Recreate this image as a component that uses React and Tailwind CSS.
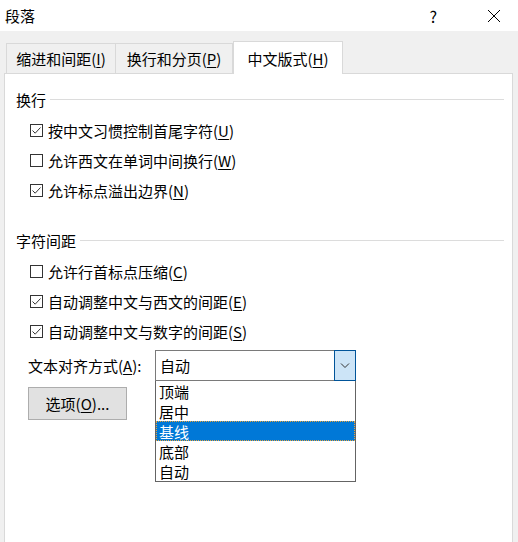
import React from 'react';

const FONT = { fontFamily: '"Noto Sans CJK SC", "Microsoft YaHei", sans-serif' };

function CheckBox({ checked }) {
  return (
    <span className="w-[13px] h-[13px] border border-[#333333] bg-white flex items-center justify-center shrink-0">
      {checked && (
        <svg width="11" height="11" viewBox="0 0 11 11">
          <path d="M1.5 5.5 L4.2 8.2 L9.5 2.5" fill="none" stroke="#333333" strokeWidth="1" />
        </svg>
      )}
    </span>
  );
}

function Option({ checked, text, hot }) {
  return (
    <div className="h-[30px] flex items-center pl-[25px] gap-[5px]">
      <CheckBox checked={checked} />
      <span className="text-[15px] leading-none">
        {text}(<span className="underline underline-offset-2">{hot}</span>)
      </span>
    </div>
  );
}

function Section({ title }) {
  return (
    <div className="h-5 flex items-center pl-[11px] pr-[8px] gap-[4px]">
      <span className="text-[15px] leading-none">{title}</span>
      <div className="flex-1 h-px bg-[#dcdcdc]" />
    </div>
  );
}

export default function App() {
  const items = ['顶端', '居中', '基线', '底部', '自动'];
  return (
    <div className="w-[518px] h-[542px] bg-[#f0f0f0] overflow-hidden flex flex-col text-black" style={FONT}>
      {/* title bar */}
      <div className="h-[31px] bg-white flex items-center shrink-0">
        <span className="pl-[5px] text-[15px] leading-none">段落</span>
        <div className="flex-1" />
        <span className="text-[16px] leading-none mr-[50px]">?</span>
        <svg width="14" height="14" viewBox="0 0 14 14" className="mr-[17px]">
          <path d="M1 1 L13 13 M13 1 L1 13" stroke="#000" strokeWidth="1" />
        </svg>
      </div>

      {/* tabs */}
      <div className="h-[42px] flex items-end pl-[6px] shrink-0">
        <div className="w-[110px] h-[30px] border border-b-0 border-[#d9d9d9] flex items-center justify-center text-[15px] leading-none">
          缩进和间距(<span className="underline underline-offset-2">I</span>)
        </div>
        <div className="w-[117px] h-[30px] border border-l-0 border-b-0 border-[#d9d9d9] flex items-center justify-center text-[15px] leading-none">
          换行和分页(<span className="underline underline-offset-2">P</span>)
        </div>
        <div className="w-[110px] h-[33px] -mb-px relative z-10 bg-white border border-b-0 border-[#d9d9d9] flex items-center justify-center text-[15px] leading-none">
          中文版式(<span className="underline underline-offset-2">H</span>)
        </div>
      </div>

      {/* panel */}
      <div className="flex-1 mx-[4px] mr-[5px] bg-white border border-b-0 border-[#d9d9d9] pt-[15px]">
        <Section title="换行" />
        <div className="mt-[6px]">
          <Option checked text="按中文习惯控制首尾字符" hot="U" />
          <Option text="允许西文在单词中间换行" hot="W" />
          <Option checked text="允许标点溢出边界" hot="N" />
        </div>

        <div className="mt-[25px]">
          <Section title="字符间距" />
        </div>
        <div className="mt-[6px]">
          <Option text="允许行首标点压缩" hot="C" />
          <Option checked text="自动调整中文与西文的间距" hot="E" />
          <Option checked text="自动调整中文与数字的间距" hot="S" />
        </div>

        <div className="mt-[4px] flex items-center pl-[23px]">
          <span className="w-[127px] text-[15px] leading-none">
            文本对齐方式(<span className="underline underline-offset-2">A</span>):
          </span>
          <div className="relative">
            <div className="w-[201px] h-[31px] border border-[#7a7a7a] flex items-center">
              <span className="pl-[4px] flex-1 text-[15px] leading-none">自动</span>
              <div className="w-[22px] h-[31px] -mr-px -my-px bg-[#cce4f7] border border-[#005499] flex items-center justify-center">
                <svg width="10" height="6" viewBox="0 0 10 6">
                  <path d="M1 0.5 L5 4.5 L9 0.5" fill="none" stroke="#333" strokeWidth="1" />
                </svg>
              </div>
            </div>
            <div className="absolute left-0 top-[31px] w-[201px] bg-white border border-t-0 border-[#646464] z-20">
              {items.map((it) => (
                <div
                  key={it}
                  className={
                    it === '基线'
                      ? 'h-5 flex items-center pl-[2px] bg-[#0078d7] text-white text-[15px] leading-none border border-dotted border-[#e8a33c]'
                      : 'h-5 flex items-center pl-[3px] text-[15px] leading-none'
                  }
                >
                  {it}
                </div>
              ))}
            </div>
          </div>
        </div>

        <div className="mt-[6px] pl-[23px]">
          <div className="w-[99px] h-[33px] bg-[#e1e1e1] border border-[#adadad] flex items-center justify-center text-[15px] leading-none">
            选项(<span className="underline underline-offset-2">O</span>)...
          </div>
        </div>
      </div>
    </div>
  );
}
